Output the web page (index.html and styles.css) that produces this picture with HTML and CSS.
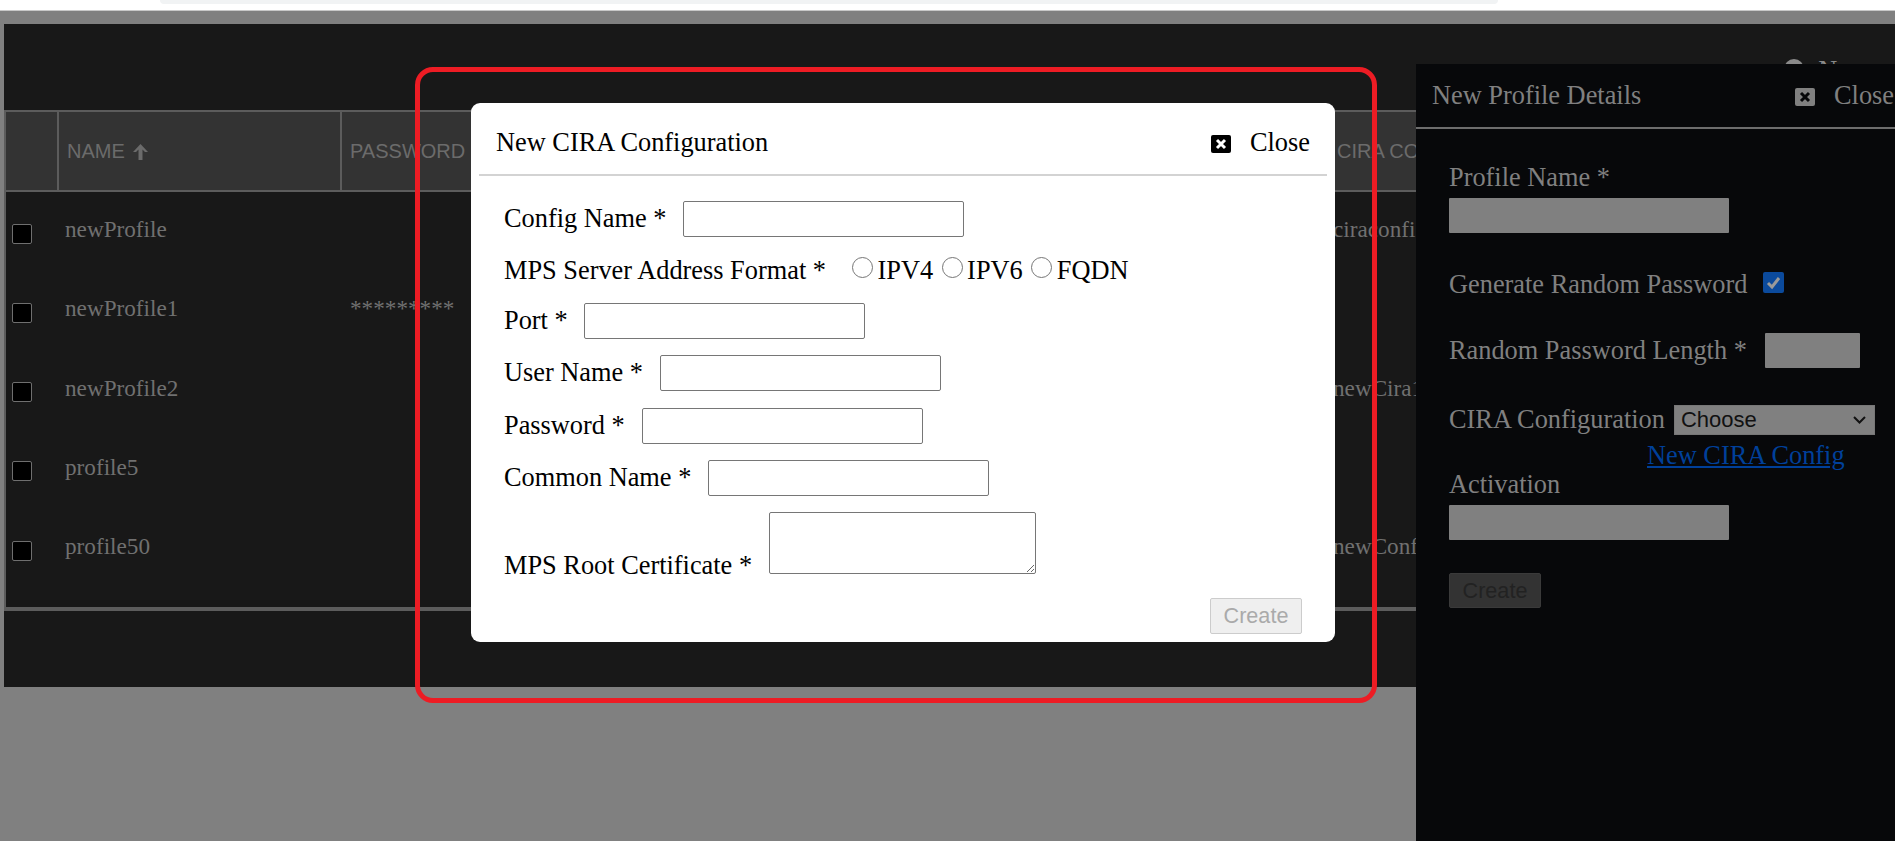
FILE: index.html
```html
<!DOCTYPE html>
<html lang="en">
<head>
<meta charset="utf-8">
<title>New CIRA Configuration</title>
<link rel="stylesheet" href="styles.css">
</head>
<body>
<div class="browser-top"><div class="omnibox"></div></div>
<main class="panel">
  <div class="toolbar">
    <svg class="tool-icon" viewBox="0 0 20 20"><circle cx="10" cy="10" r="10" fill="#8a8a8a"/></svg>
    <span class="tool-label">New</span>
  </div>
  <table class="grid">
    <colgroup><col class="c-check"><col class="c-name"><col class="c-pass"><col class="c-cira"></colgroup>
    <thead>
      <tr>
        <th></th>
        <th>NAME <svg class="sort" viewBox="0 0 15 16"><path d="M7.500 0 15 8 12 8 9.500 5.500V16H5.500V5.500L3 8H0Z"/></svg></th>
        <th>PASSWORD</th>
        <th>CIRA CONFIGURATION</th>
      </tr>
    </thead>
    <tbody>
      <tr><td><input class="row-check" type="checkbox"></td><td>newProfile</td><td></td><td>ciraconfig</td></tr>
      <tr><td><input class="row-check" type="checkbox"></td><td>newProfile1</td><td>*********</td><td></td></tr>
      <tr><td><input class="row-check" type="checkbox"></td><td>newProfile2</td><td></td><td>newCira1</td></tr>
      <tr><td><input class="row-check" type="checkbox"></td><td>profile5</td><td></td><td></td></tr>
      <tr><td><input class="row-check" type="checkbox"></td><td>profile50</td><td></td><td>newConfig</td></tr>
    </tbody>
  </table>
</main>

<aside class="pane">
  <header class="pane-head">
    <span>New Profile Details</span>
    <span class="close">
      <svg class="x-icon" viewBox="0 0 20 18"><rect width="20" height="18" rx="2" fill="#808080"/><path d="M6 5 14 13M14 5 6 13" stroke="#07080a" stroke-width="3"/></svg>
      Close
    </span>
  </header>
  <div class="pane-body">
    <label class="stack">Profile Name *<input class="pane-input" type="text"></label>
    <div class="pane-row gen-row">Generate Random Password
      <span class="blue-check"><svg viewBox="0 0 21 21"><path d="M5 11 9 15 16 6" fill="none" stroke="#9a9a9a" stroke-width="3"/></svg></span>
    </div>
    <div class="pane-row len-row">Random Password Length *<input class="pane-input short" type="text"></div>
    <div class="pane-row cira-row">CIRA Configuration
      <span class="select-wrap">
        <select class="pane-select"><option>Choose</option></select>
        <svg class="chevron" viewBox="0 0 13 8"><path d="M1 1 6.500 6.500 12 1" fill="none" stroke="#111" stroke-width="2"/></svg>
      </span>
    </div>
    <a class="new-link" href="#">New CIRA Config</a>
    <label class="stack activation">Activation<input class="pane-input" type="text"></label>
    <button class="pane-create" type="button" disabled>Create</button>
  </div>
</aside>

<section class="modal">
  <header class="modal-head">
    <span>New CIRA Configuration</span>
    <span class="close">
      <svg class="x-icon" viewBox="0 0 20 18"><rect width="20" height="18" rx="2" fill="#000"/><path d="M6 5 14 13M14 5 6 13" stroke="#fff" stroke-width="3"/></svg>
      Close
    </span>
  </header>
  <form class="modal-form">
    <div class="row"><label>Config Name *</label><input class="field" type="text"></div>
    <div class="row radios">
      <label class="fmt">MPS Server Address Format *</label>
      <input class="radio" type="radio" name="f"><span>IPV4</span>
      <input class="radio" type="radio" name="f"><span>IPV6</span>
      <input class="radio" type="radio" name="f"><span>FQDN</span>
    </div>
    <div class="row port-row"><label>Port *</label><input class="field" type="text"></div>
    <div class="row"><label>User Name *</label><input class="field" type="text"></div>
    <div class="row pw-row"><label>Password *</label><input class="field" type="text"></div>
    <div class="row"><label>Common Name *</label><input class="field" type="text"></div>
    <div class="row cert"><label>MPS Root Certificate *</label><textarea class="area"></textarea></div>
    <div class="actions"><button class="create" type="button" disabled>Create</button></div>
  </form>
</section>

<div class="annotation"></div>
</body>
</html>
```
FILE: styles.css
```css
* { box-sizing: border-box; }
html, body { margin: 0; height: 100%; }
body {
  position: relative;
  width: 1895px;
  height: 841px;
  overflow: hidden;
  background: #808080;
  font-family: "Liberation Serif", serif;
  font-size: 26.35px;
  color: #000;
}
.browser-top { height: 11px; background: #fff; border-bottom: 1px solid #c8c8c8; }
.omnibox {
  width: 1338px;
  height: 4px;
  margin-left: 160px;
  background: #f1f3f4;
  border-radius: 0 0 8px 8px;
}
.panel {
  height: 663px;
  margin: 13px 0 0 4px;
  background: #181818;
  overflow: hidden;
}
.toolbar {
  height: 86px;
  padding: 35px 27px 0 0;
  display: flex;
  justify-content: flex-end;
  align-items: flex-start;
  gap: 14px;
}
.tool-icon { width: 20px; height: 20px; }
.tool-label { line-height: 30px; color: #8a8a8a; margin-top: -3px; }

.grid {
  width: 1891px;
  table-layout: fixed;
  border-collapse: separate;
  border-spacing: 0;
  border: solid #5c5c5c;
  border-width: 2px 2px 4px 2px;
  font-size: 23.2px;
  color: #707070;
}
.c-check { width: 51px; }
.c-name { width: 283px; }
.c-pass { width: 987px; }
.c-cira { width: 570px; }
.grid th {
  height: 80px;
  padding: 0 8px;
  background: #333;
  border-bottom: 2px solid #5c5c5c;
  border-left: 2px solid #5c5c5c;
  font: 400 20px "Liberation Sans", sans-serif;
  color: #6b6b6b;
  text-align: left;
  white-space: nowrap;
  overflow: hidden;
}
.grid th:first-child { border-left: 0; padding: 0; }
.sort { width: 15px; height: 16px; margin-left: 3px; vertical-align: -2px; fill: #6b6b6b; }
.grid td {
  height: 79.25px;
  padding: 0 8px 4px;
  white-space: nowrap;
  overflow: hidden;
  vertical-align: middle;
}
.grid td:first-child { padding-left: 6px; }
.grid td:nth-child(3) { padding-left: 10px; }
.grid td:last-child { padding-left: 6px; }
.grid tbody tr:last-child td { height: 98px; padding-bottom: 23px; }
.row-check {
  appearance: none;
  display: block;
  width: 20px;
  height: 20px;
  margin: 8px 0 0;
  background: #000;
  border: 1px solid #6f6f6f;
  border-radius: 2px;
}

.pane {
  position: absolute;
  left: 1416px;
  top: 64px;
  width: 479px;
  height: 777px;
  background: #07080a;
  color: #808080;
}
.pane-head {
  height: 65px;
  padding: 17px 0 0 16px;
  display: flex;
  justify-content: space-between;
  border-bottom: 2px solid #6d6d6d;
  line-height: 30px;
  white-space: nowrap;
}
.close { display: flex; align-items: center; height: 30px; gap: 19px; }
.pane-head .close { width: 100px; }
.x-icon { width: 20px; height: 18px; flex: none; margin-top: 2px; }
.pane-body { padding: 0 33px; }
.stack { display: block; line-height: 30px; }
.stack:first-child { padding-top: 34px; }
.pane-input {
  display: block;
  width: 280px;
  height: 35px;
  margin-top: 5px;
  background: #808080;
  border: 0;
  border-radius: 1px;
}
.pane-row { display: flex; align-items: center; white-space: nowrap; line-height: 30px; }
.gen-row { margin-top: 37px; gap: 15px; }
.blue-check { width: 21px; height: 21px; border-radius: 2px; background: #0b4a9c; margin-top: -6px; flex: none; }
.blue-check svg { display: block; width: 21px; height: 21px; }
.len-row { margin-top: 33px; gap: 18px; }
.short { width: 95px; margin: 0; flex: none; }
.cira-row { margin-top: 37px; gap: 9px; }
.select-wrap { position: relative; display: block; flex: none; width: 201px; height: 30px; }
.pane-select {
  appearance: none;
  display: block;
  width: 201px;
  height: 30px;
  background: #808080;
  border: 1px solid #777;
  border-radius: 0;
  color: #111;
  font: 22px "Liberation Sans", sans-serif;
  padding: 0 0 2px 6px;
}
.chevron { position: absolute; right: 9px; top: 11px; width: 13px; height: 8px; }
.new-link { display: block; width: max-content; margin: 6px 0 0 198px; color: #00409a; line-height: 30px; }
.activation { margin-top: -1px; }
.pane-create {
  display: block;
  width: 92px;
  height: 35px;
  margin-top: 33px;
  background: #333;
  border: 1px solid #3a3a3a;
  border-radius: 2px;
  color: #222;
  font: 21.6px "Liberation Sans", sans-serif;
  padding: 0;
}

.modal {
  position: absolute;
  left: 471px;
  top: 103px;
  width: 864px;
  height: 539px;
  background: #fff;
  border-radius: 9px;
}
.modal-head {
  height: 73px;
  margin: 0 8px;
  padding: 25px 17px 0;
  display: flex;
  justify-content: space-between;
  border-bottom: 2px solid #d3d3d3;
  line-height: 30px;
}
.modal-form {
  padding: 25px 33px 0;
  display: flex;
  flex-direction: column;
  gap: 16px;
}
.row { display: flex; align-items: center; gap: 17px; line-height: 30px; white-space: nowrap; }
.port-row { gap: 16px; }
.pw-row { margin-top: 1px; }
.field {
  width: 281px;
  height: 36px;
  margin: 0;
  background: #fff;
  border: 1px solid #767676;
  border-radius: 2px;
}
.radios { height: 34px; padding-top: 2px; gap: 4.500px; }
.fmt { margin-right: 21.500px; }
.radio {
  appearance: none;
  width: 21px;
  height: 21px;
  margin: -7px 0 0;
  background: #fff;
  border: 1px solid #767676;
  border-radius: 50%;
}
.radios span + .radio { margin-left: 4px; }
.cert { align-items: flex-end; gap: 17px; }
.cert label { line-height: 30px; margin-bottom: -7px; }
.area {
  display: block;
  width: 267px;
  height: 62px;
  margin: 0;
  background: #fff;
  border: 1px solid #767676;
  border-radius: 2px;
}
.actions { display: flex; justify-content: flex-end; margin: 7.500px 0 0; }
.create {
  width: 92px;
  height: 36px;
  padding: 0;
  background: #efefef;
  border: 1px solid #ccc;
  border-radius: 2px;
  color: #aaa;
  font: 21.6px "Liberation Sans", sans-serif;
}

.annotation {
  position: absolute;
  left: 415px;
  top: 67px;
  width: 962px;
  height: 636px;
  border: 5px solid #ed1c24;
  border-radius: 18px;
}
```
